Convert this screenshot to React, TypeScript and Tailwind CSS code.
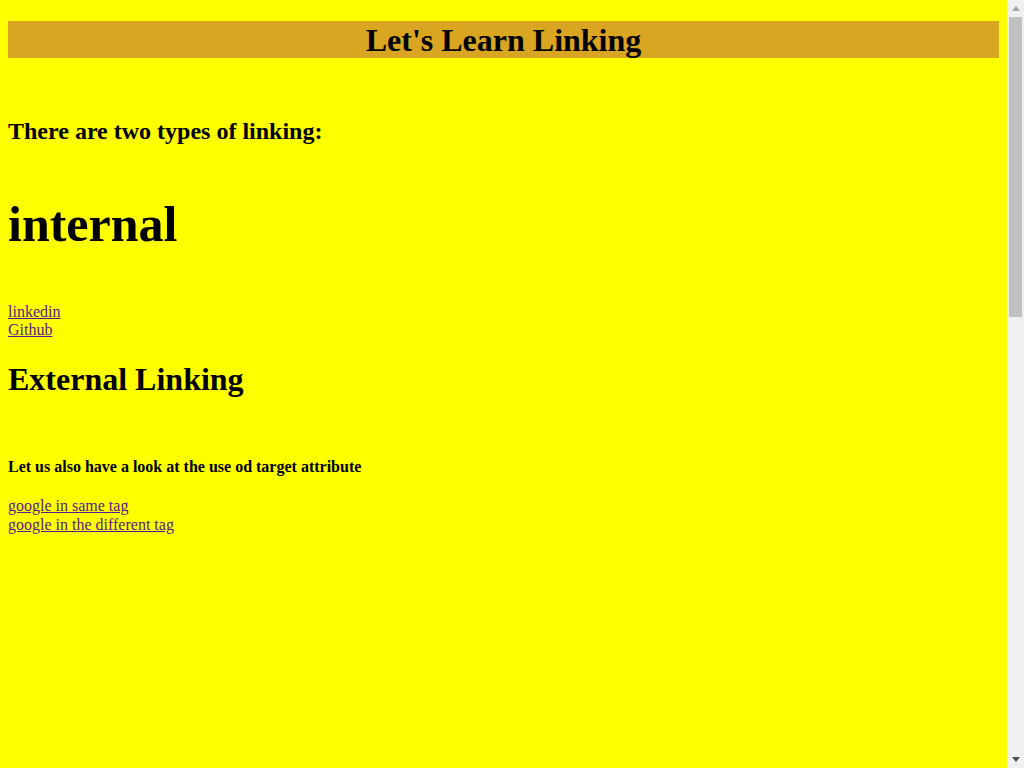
function ScrollArrow({ up, color }: { up: boolean; color: string }) {
  return (
    <div className="flex h-[17px] w-full items-center justify-center">
      <svg width="8" height="5" viewBox="0 0 8 5" aria-hidden>
        <polygon points={up ? "0,5 4,0 8,5" : "0,0 8,0 4,5"} fill={color} />
      </svg>
    </div>
  );
}

export default function App() {
  return (
    <div className="flex h-screen w-full overflow-hidden font-['Liberation_Serif','Times_New_Roman',serif] text-black">
      <main className="flex-1 overflow-hidden bg-[#ffff00] px-2 pt-[21px]">
        <h1 className="bg-[#daa520] pt-px text-center text-[32px] font-bold leading-[36px]">
          Let&apos;s Learn Linking
        </h1>

        <h2 className="mt-[60px] text-[24px] font-bold leading-[27px]">
          There are two types of linking:
        </h2>

        <h1 className="mt-[52px] text-[50px] font-bold leading-[55px]">internal</h1>

        <div className="mt-[51px] text-[16px] leading-[18.4px]">
          <a href="#linkedin" className="text-[#551a8b] underline">
            linkedin
          </a>
          <br />
          <a href="#github" className="text-[#551a8b] underline">
            Github
          </a>
        </div>

        <h1 className="mt-[21px] text-[32px] font-bold leading-[37px]">External Linking</h1>

        <h4 className="mt-[60px] text-[16px] font-bold leading-[18.4px]">
          Let us also have a look at the use od target attribute
        </h4>

        <div className="mt-[21px] text-[16px] leading-[18.4px]">
          <a href="#google" className="text-[#551a8b] underline">
            google in same tag
          </a>
          <br />
          <a href="#google-new" className="text-[#551a8b] underline">
            google in the different tag
          </a>
        </div>
      </main>

      {/* page scrollbar as it shows in the screenshot */}
      <aside className="flex w-[17px] shrink-0 flex-col items-center bg-[#f1f1f1]">
        <ScrollArrow up color="#a3a3a3" />
        <div className="h-[300px] w-[13px] bg-[#c1c1c1]" />
        <div className="flex-1" />
        <ScrollArrow up={false} color="#505050" />
      </aside>
    </div>
  );
}
